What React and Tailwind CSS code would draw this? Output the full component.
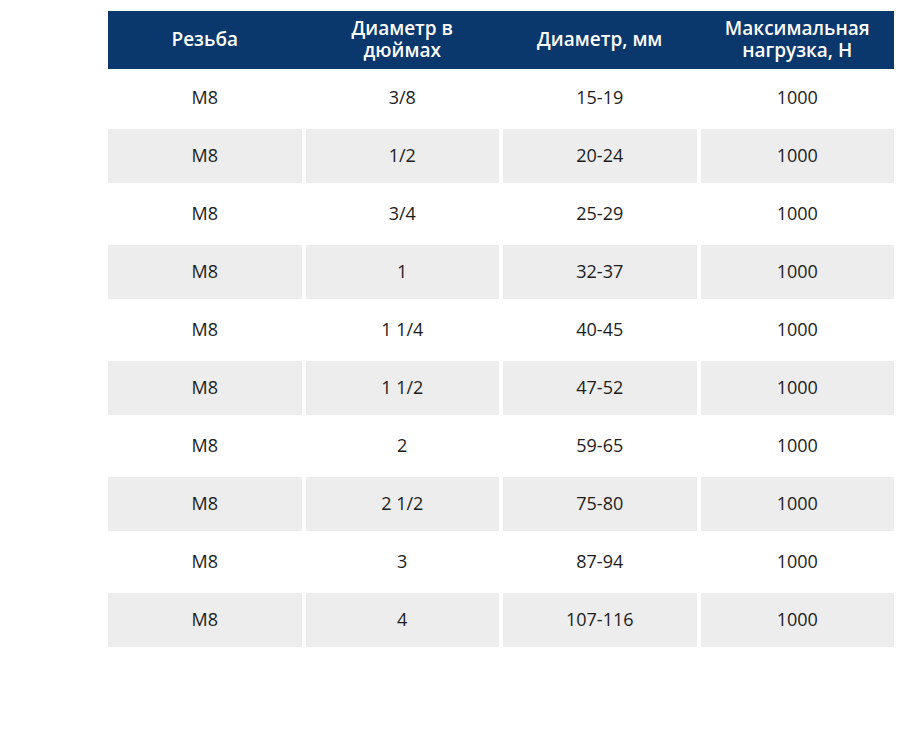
const headers = ["Резьба", "Диаметр в\nдюймах", "Диаметр, мм", "Максимальная\nнагрузка, Н"];

const rows = [
  ["M8", "3/8", "15-19", "1000"],
  ["M8", "1/2", "20-24", "1000"],
  ["M8", "3/4", "25-29", "1000"],
  ["M8", "1", "32-37", "1000"],
  ["M8", "1 1/4", "40-45", "1000"],
  ["M8", "1 1/2", "47-52", "1000"],
  ["M8", "2", "59-65", "1000"],
  ["M8", "2 1/2", "75-80", "1000"],
  ["M8", "3", "87-94", "1000"],
  ["M8", "4", "107-116", "1000"],
];

const App = () => {
  return (
    <div className="w-[900px] h-[748px] bg-white overflow-hidden font-['Open_Sans',sans-serif]">
      <div className="ml-[108px] mt-[11px] w-[786px] flex flex-col">
        <div className="h-[58px] bg-[#0a386d] grid grid-cols-4 gap-x-[4px] text-white text-[19px] font-semibold leading-[22px]">
          {headers.map((h) => (
            <div key={h} className="flex items-center justify-center text-center whitespace-pre-line pb-[2px]">
              {h}
            </div>
          ))}
        </div>
        <div className="mt-[2px] flex flex-col gap-[4px] text-[18px] text-[#1c1c1c]">
          {rows.map((r, i) => (
            <div key={i} className="h-[54px] grid grid-cols-4 gap-x-[4px]">
              {r.map((c, j) => (
                <div
                  key={j}
                  className={`flex items-center justify-center pb-[2px] ${i % 2 === 1 ? "bg-[#ededed]" : "bg-white"}`}
                >
                  {c}
                </div>
              ))}
            </div>
          ))}
        </div>
      </div>
    </div>
  );
};

export default App;
